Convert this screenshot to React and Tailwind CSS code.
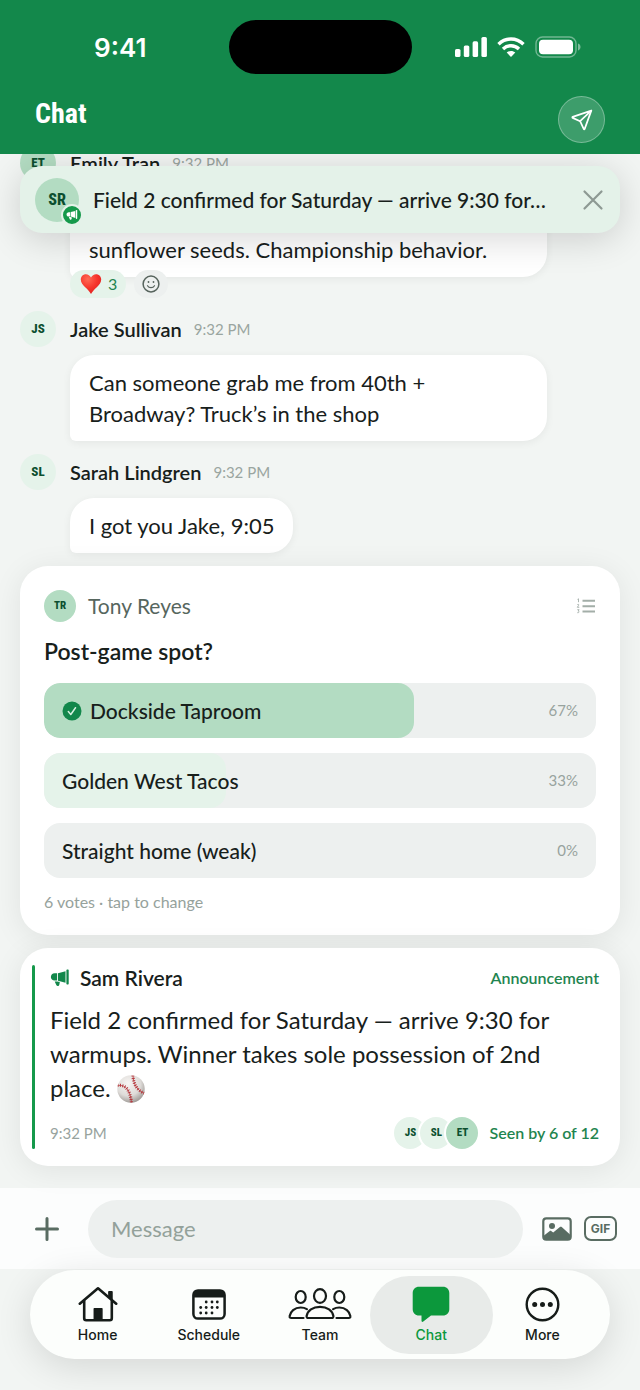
import React, { useState } from "react";

const options = [
  { id: 1, label: "Dockside Taproom", percent: 67 },
  { id: 2, label: "Golden West Tacos", percent: 33 },
  { id: 3, label: "Straight home (weak)", percent: 0 },
];

const seenBy = [
  { initials: "JS", color: "bg-[#e5f3ea]" },
  { initials: "SL", color: "bg-[#e5f3ea]" },
  { initials: "ET", color: "bg-[#b3dcc2]" },
];

const MegaphoneIcon = ({ className }) => (
  <svg className={className} viewBox="0 0 20 20" fill="currentColor">
    <path d="M17.4 1.5h.3c.6 0 1 .4 1 1v13c0 .6-.4 1-1 1h-.3c-.6 0-1-.4-1-1v-13c0-.6.4-1 1-1z" />
    <path d="M15.5 3.2v11.6L8 12.7V5.2l7.500-2z" />
    <path d="M7.100 5.300v7.300H4.600C2.400 12.600.9 11.100.9 9s1.500-3.700 3.700-3.700h2.500z" />
    <path d="M4.700 13.500h2.500l2.600.6-.5 2.600c-.2.800-.7 1.300-1.500 1.300-.7 0-1.200-.4-1.500-1.100l-1.600-3.400z" />
  </svg>
);

const HeartIcon = () => (
  <svg className="w-[22px] h-[22px]" viewBox="0 0 22 22">
    <defs>
      <radialGradient id="heart" cx="0.35" cy="0.25" r="0.9">
        <stop offset="0" stopColor="#ff6a55" />
        <stop offset="0.5" stopColor="#f6352b" />
        <stop offset="1" stopColor="#d91a1c" />
      </radialGradient>
    </defs>
    <path
      fill="url(#heart)"
      d="M11 21C9.600 18.300 7.500 16.400 5.200 14.200 2.900 12 .8 9.800.8 6.600.8 3.400 3.100 1.200 5.900 1.200c2.200 0 4.100 1.300 5.100 3.300 1-2 2.900-3.300 5.100-3.300 2.800 0 5.100 2.200 5.100 5.400 0 3.200-2.100 5.400-4.400 7.600C14.500 16.400 12.400 18.300 11 21z"
    />
  </svg>
);

const BaseballIcon = () => (
  <svg className="inline-block w-7 h-7 align-[-6px]" viewBox="0 0 28 28">
    <defs>
      <radialGradient id="ball" cx="0.4" cy="0.3" r="0.75">
        <stop offset="0" stopColor="#f7f5f3" />
        <stop offset="0.6" stopColor="#dedbd8" />
        <stop offset="1" stopColor="#98938f" />
      </radialGradient>
      <clipPath id="ballClip">
        <circle cx="14" cy="14" r="13.700" />
      </clipPath>
    </defs>
    <circle cx="14" cy="14" r="13.700" fill="url(#ball)" />
    <g clipPath="url(#ballClip)" fill="none" stroke="#b5343a">
      <path d="M.5 10.500c7-1 12.500 3 14 17" strokeWidth="0.8" />
      <path d="M.5 10.500c7-1 12.500 3 14 17" strokeWidth="3.200" strokeDasharray="0.9 1.500" />
      <path d="M16 .5c.3 9 4.500 15.500 12 18" strokeWidth="0.8" />
      <path d="M16 .5c.3 9 4.500 15.500 12 18" strokeWidth="3.200" strokeDasharray="0.9 1.500" />
    </g>
  </svg>
);

const SmileIcon = () => (
  <svg className="w-[18px] h-[18px]" viewBox="0 0 18 18" fill="none" stroke="#56635c">
    <circle cx="9" cy="9" r="7.900" strokeWidth="1.500" />
    <path d="M5.500 10.700c.8 1.300 2 1.900 3.500 1.900s2.700-.6 3.500-1.900" strokeWidth="1.200" strokeLinecap="round" />
    <ellipse cx="6.500" cy="7" rx="0.900" ry="1.100" fill="#56635c" stroke="none" />
    <ellipse cx="11.500" cy="7" rx="0.900" ry="1.100" fill="#56635c" stroke="none" />
  </svg>
);

const HomeIcon = () => (
  <svg className="w-10 h-9" viewBox="0 0 40 36" fill="none" stroke="currentColor" strokeLinecap="round" strokeLinejoin="round">
    <path d="M1.800 17.700 20 2.300l18.200 15.400" strokeWidth="2.600" />
    <path d="M6.200 15v17.200c0 1.200.8 2 2 2h23.600c1.200 0 2-.8 2-2V15" strokeWidth="2.600" />
    <path d="M31 5.500h3.200v8.700L31 11.500z" fill="currentColor" strokeWidth="1" />
    <path d="M16.300 22.700h7.600v11h-7.600z" fill="currentColor" strokeWidth="1.500" />
  </svg>
);

const ScheduleIcon = () => (
  <svg className="w-[34px] h-[31px]" viewBox="0 0 34 31" fill="none">
    <rect x="1.400" y="1.400" width="31.200" height="28.200" rx="4.600" stroke="currentColor" strokeWidth="2.500" />
    <path d="M1 8.500V6a5 5 0 0 1 5-5h22a5 5 0 0 1 5 5v2.500z" fill="currentColor" />
    <g fill="currentColor">
      {[14.200, 20, 25.300].map((x) => <circle key={x} cx={x} cy="13" r="1.400" />)}
      {[8.700, 14.200, 20, 25.300].map((x) => <circle key={x} cx={x} cy="18.500" r="1.400" />)}
      {[8.700, 14.200, 20].map((x) => <circle key={x} cx={x} cy="24" r="1.400" />)}
    </g>
  </svg>
);

const TeamIcon = () => (
  <svg className="w-16 h-8" viewBox="0 0 64 32" fill="none" stroke="currentColor" strokeWidth="2.200" strokeLinecap="round">
    <ellipse cx="12.700" cy="9" rx="5" ry="6" />
    <ellipse cx="51.300" cy="9" rx="5" ry="6" />
    <ellipse cx="32" cy="8" rx="6" ry="6.900" />
    <path d="M15.500 30H3.300c-1.200 0-1.900-.7-1.700-1.800.7-4.800 5-8.700 11.100-8.700 2.400 0 4.500.6 6.200 1.600" />
    <path d="M48.500 30h12.200c1.200 0 1.900-.7 1.700-1.800-.7-4.800-5-8.700-11.100-8.700-2.400 0-4.500.6-6.200 1.600" />
    <path d="M20.400 30h23.200c1.300 0 2-.8 1.800-2-.9-5.300-6.200-9.200-13.400-9.200s-12.500 3.900-13.400 9.200c-.2 1.200.5 2 1.800 2z" />
  </svg>
);

const ChatIcon = () => (
  <svg className="w-[38px] h-9" viewBox="0 0 38 36" fill="currentColor">
    <path d="M7 .7h24c3.700 0 6.300 2.600 6.300 6.300v16.200c0 3.700-2.600 6.300-6.300 6.300H19l-7.700 6.100c-.9.700-1.800.3-1.800-.8v-5.300H7c-3.700 0-6.300-2.600-6.300-6.300V7C.7 3.300 3.300.7 7 .7z" />
  </svg>
);

const MoreIcon = () => (
  <svg className="w-[35px] h-[35px]" viewBox="0 0 35 35" fill="none">
    <circle cx="17.500" cy="17.500" r="15.800" stroke="currentColor" strokeWidth="2.400" />
    <g fill="currentColor">
      <circle cx="9.700" cy="17.500" r="2.500" />
      <circle cx="17.500" cy="17.500" r="2.500" />
      <circle cx="25.300" cy="17.500" r="2.500" />
    </g>
  </svg>
);

const tabs = [
  { name: "Home", icon: <HomeIcon /> },
  { name: "Schedule", icon: <ScheduleIcon /> },
  { name: "Team", icon: <TeamIcon /> },
  { name: "Chat", icon: <ChatIcon /> },
  { name: "More", icon: <MoreIcon /> },
];

const MessageHeader = ({ initials, name, color }) => (
  <div className="flex items-center h-9">
    <div
      className={`w-9 h-9 rounded-full flex items-center justify-center font-['Roboto_Condensed','Roboto',sans-serif] font-extrabold text-[13px] text-[#0c4f2f] ${color}`}
    >
      {initials}
    </div>
    <span className="ml-3.5 text-xl font-semibold">{name}</span>
    <span className="ml-3 text-[15px] text-[#9aa5a0]">9:32 PM</span>
  </div>
);

const StatusBar = () => (
  <div className="flex items-center justify-between h-[94px] pl-[94px] pr-[59px]">
    <span className="w-[134px] font-['Inter',sans-serif] text-[26px] font-semibold">9:41</span>
    <div className="w-[183px] h-[54px] rounded-full bg-black" />
    <div className="w-[169px] flex items-center justify-end gap-2.5">
      <svg className="w-8 h-5" viewBox="0 0 32 20" fill="currentColor">
        <rect x="0" y="12" width="5.500" height="8" rx="1.600" />
        <rect x="8.800" y="8.500" width="5.500" height="11.500" rx="1.600" />
        <rect x="17.600" y="4.300" width="5.500" height="15.700" rx="1.600" />
        <rect x="26.400" y="0" width="5.500" height="20" rx="1.600" />
      </svg>
      <svg className="w-7 h-5" viewBox="0 0 28 20" fill="none" stroke="currentColor" strokeWidth="3.400">
        <path d="M1.500 7.200C5 3.800 9.300 2 14 2s9 1.800 12.500 5.200" />
        <path d="M6 12c2.300-2.200 5-3.300 8-3.300s5.700 1.100 8 3.300" />
        <path d="M14 20l-4.300-4.400c1.200-1.100 2.600-1.700 4.300-1.700s3.100.6 4.300 1.700z" fill="currentColor" stroke="none" />
      </svg>
      <svg className="w-[46px] h-[22px]" viewBox="0 0 46 22" fill="none">
        <rect x="1" y="1" width="40" height="20" rx="6.500" stroke="#fff" strokeOpacity="0.4" strokeWidth="1.400" />
        <rect x="4" y="3.800" width="34" height="14.400" rx="4" fill="#fff" />
        <path d="M43 7.500c1.600.6 2.500 1.900 2.500 3.500s-.9 2.900-2.500 3.500z" fill="#fff" fillOpacity="0.45" />
      </svg>
    </div>
  </div>
);

const PinnedBanner = ({ onClose }) => (
  <div className="absolute z-[5] top-[21px] inset-x-5 h-[67px] rounded-[22px] bg-[#e4f2e9] shadow-[0_6px_36px_rgba(0,0,0,0.16)] flex items-center pl-[15px] pr-4">
    <div className="relative w-11 h-11 shrink-0 rounded-full bg-[#b3dcc2] flex items-center justify-center font-['Roboto_Condensed','Roboto',sans-serif] font-extrabold text-base text-[#0c4f2f]">
      SR
      <span className="absolute -right-1 -bottom-1 w-[22px] h-[22px] rounded-full border-2 border-[#e4f2e9] bg-[#15994b] text-white flex items-center justify-center">
        <MegaphoneIcon className="w-3 h-3" />
      </span>
    </div>
    <p className="ml-3.5 flex-1 min-w-0 whitespace-nowrap text-[21px] leading-7 font-medium">
      Field 2 confirmed for Saturday — arrive 9:30 for…
    </p>
    <button aria-label="Dismiss" onClick={onClose} className="cursor-pointer">
      <svg className="w-[22px] h-[22px]" viewBox="0 0 22 22" stroke="#8d9993" strokeWidth="2.200" strokeLinecap="round">
        <path d="M2.500 2.500l17 17M19.500 2.500l-17 17" />
      </svg>
    </button>
  </div>
);

const Poll = () => {
  const [selected, setSelected] = useState(1);

  return (
    <section className="rounded-[28px] bg-white px-6 pt-6 pb-[23px] shadow-[0_4px_30px_rgba(0,0,0,0.08)]">
      <div className="flex items-center h-8">
        <div className="w-8 h-8 rounded-full bg-[#b3dcc2] flex items-center justify-center font-['Roboto_Condensed','Roboto',sans-serif] font-extrabold text-[11px] text-[#0c4f2f]">
          TR
        </div>
        <span className="ml-3 flex-1 text-[21px] leading-7 text-[#56665e]">Tony Reyes</span>
        <svg className="w-5 h-4" viewBox="0 0 20 16" stroke="#a3aea8" fill="none">
          <path d="M6.500 2.700h12.500M6.500 8.200h12.500M6.500 13.600h12.500" strokeWidth="2" />
          <path d="M1.500 1.400l1-.6v3.400M1.300 6.700c1-.9 2-.1 1.200.9L1.300 9.300H3.300M1.300 11.700h1.800l-.9 1.400c1.400.1 1 2-.9 1.600" strokeWidth="0.900" />
        </svg>
      </div>
      <h2 className="mt-3.5 text-[23px] leading-[30px] font-semibold">Post-game spot?</h2>
      <div className="mt-[17px] flex flex-col gap-[15px]">
        {options.map((option) => (
          <button
            key={option.id}
            onClick={() => setSelected(option.id)}
            className="relative h-[55px] rounded-2xl overflow-hidden bg-[#edf0ef] flex items-center px-[18px] text-left cursor-pointer"
          >
            <span
              className={`absolute inset-y-0 left-0 rounded-2xl ${selected === option.id ? "bg-[#b3dcc2]" : "bg-[#e5f3ea]"}`}
              style={{ width: `${option.percent}%` }}
            />
            {selected === option.id && (
              <svg className="relative w-5 h-5 mr-2" viewBox="0 0 20 20" fill="none">
                <circle cx="10" cy="10" r="9.500" fill="#12874b" />
                <path d="M6.300 10.600l2.500 2.900 4.700-6.800" stroke="#d5efdf" strokeWidth="1.500" strokeLinecap="round" strokeLinejoin="round" />
              </svg>
            )}
            <span className="relative flex-1 text-[21px] leading-7 font-medium">{option.label}</span>
            <span className="relative text-[15px] text-[#98a39e]">{option.percent}%</span>
          </button>
        ))}
      </div>
      <p className="mt-3.5 text-base leading-5 text-[#96a29c]">6 votes · tap to change</p>
    </section>
  );
};

const Announcement = () => (
  <section className="rounded-[28px] bg-white py-[17px] pl-3 pr-[21px] flex gap-[15px] shadow-[0_4px_30px_rgba(0,0,0,0.08)]">
    <div className="w-[3px] shrink-0 rounded-full bg-[#15994b]" />
    <div className="flex-1 min-w-0">
      <div className="flex items-center h-[26px]">
        <MegaphoneIcon className="w-5 h-5 text-[#12874b]" />
        <h2 className="ml-2.5 flex-1 text-[21px] leading-7 font-semibold">Sam Rivera</h2>
        <span className="text-base font-semibold text-[#1f8550]">Announcement</span>
      </div>
      <p className="mt-3 text-2xl leading-[34px]">
        Field 2 confirmed for Saturday — arrive 9:30 for
        <br />
        warmups. Winner takes sole possession of 2nd
        <br />
        place. <BaseballIcon />
      </p>
      <div className="mt-3 flex items-center h-8">
        <span className="flex-1 text-[15px] text-[#98a39e]">9:32 PM</span>
        <div className="flex">
          {seenBy.map((person) => (
            <div
              key={person.initials}
              className={`w-8 h-8 -ml-1.5 rounded-full ring-2 ring-white flex items-center justify-center font-['Roboto_Condensed','Roboto',sans-serif] font-extrabold text-[11px] text-[#0c4f2f] ${person.color}`}
            >
              {person.initials}
            </div>
          ))}
        </div>
        <span className="ml-[11px] text-base font-semibold text-[#1f8550]">Seen by 6 of 12</span>
      </div>
    </div>
  </section>
);

const Composer = () => (
  <form className="bg-[#fcfdfd] flex items-center h-[81px] pl-[35px] pr-[23px]" onSubmit={(e) => e.preventDefault()}>
    <button type="button" aria-label="Add attachment" className="cursor-pointer">
      <svg className="w-6 h-6" viewBox="0 0 24 24" stroke="#596c62" strokeWidth="3" strokeLinecap="round">
        <path d="M12 1.500v21M1.500 12h21" />
      </svg>
    </button>
    <input
      type="text"
      aria-label="Message"
      placeholder="Message"
      className="ml-[29px] flex-1 min-w-0 h-[58px] rounded-full bg-[#edf0ef] px-[23px] text-[22px] placeholder:text-[#93a19a] outline-none"
    />
    <button type="button" aria-label="Send photo" className="ml-[19px] cursor-pointer">
      <svg className="w-[30px] h-6" viewBox="0 0 30 24" fill="none">
        <rect x="1.300" y="1.300" width="27.400" height="21.400" rx="3" stroke="#596c62" strokeWidth="2.200" />
        <circle cx="10" cy="9" r="3" fill="#596c62" />
        <path d="M2 18.500l5.500-4.300c.8-.6 1.300-.5 2 0l1.700 1.300 6.400-5.200c.8-.6 1.600-.6 2.400 0l8 7.200V22H2z" fill="#596c62" />
      </svg>
    </button>
    <button
      type="button"
      className="ml-3 w-[33px] h-[25px] rounded-[7px] border-2 border-[#596c62] text-[#596c62] flex items-center justify-center font-['Inter',sans-serif] text-xs font-bold cursor-pointer"
    >
      GIF
    </button>
  </form>
);

const TabBar = () => {
  const [active, setActive] = useState("Chat");

  return (
    <nav className="mx-[30px] mt-px mb-[31px] h-[89px] rounded-full bg-[#fcfefc] px-3 flex items-center shadow-[0_8px_36px_rgba(0,0,0,0.12)] font-['Inter',sans-serif]">
      {tabs.map((tab) => (
        <div key={tab.name} className="flex-1 min-w-0 flex">
          <button
            onClick={() => setActive(tab.name)}
            className={`flex-1 -mx-1.5 h-[78px] rounded-full flex flex-col items-center cursor-pointer ${
              active === tab.name ? "bg-[#e8ebe9] text-[#0c983c]" : "text-[#161c19]"
            }`}
          >
            <span className="h-[49px] flex items-center justify-center pt-2">{tab.icon}</span>
            <span className="text-sm leading-5 font-medium">{tab.name}</span>
          </button>
        </div>
      ))}
    </nav>
  );
};

const App = () => {
  const [showBanner, setShowBanner] = useState(true);

  return (
    <div className="min-h-screen flex flex-col bg-[#f2f5f3] text-[#17201b] font-['Lato',sans-serif]">
      <header className="relative z-10 h-[154px] bg-[#13884b] text-white">
        <StatusBar />
        <div className="flex justify-between h-[49px] px-[35px]">
          <h1 className="font-['Roboto_Condensed','Roboto',sans-serif] text-[28px] leading-10 font-bold">Chat</h1>
          <button
            aria-label="Direct messages"
            className="self-end w-[47px] h-[47px] rounded-full border border-white/30 bg-white/18 flex items-center justify-center cursor-pointer"
          >
            <svg className="w-[22px] h-[22px]" viewBox="0 0 22 22" fill="none" stroke="currentColor" strokeWidth="1.700" strokeLinejoin="round" strokeLinecap="round">
              <path d="M20.300 1.600L1.700 7.900c-.5.200-.5.800 0 1l7.400 3.300 3.600 7.700c.2.500.8.500 1 0z" />
              <path d="M20.300 1.600L9.100 12.200" />
            </svg>
          </button>
        </div>
      </header>

      <main className="relative flex-1 -mt-[9px] px-5 pb-[22px] flex flex-col gap-[13px]">
        {showBanner && <PinnedBanner onClose={() => setShowBanner(false)} />}

        <article>
          <MessageHeader initials="ET" name="Emily Tran" color="bg-[#b3dcc2]" />
          <div className="pl-[50px] pr-[73px]">
            <div className="mt-2 min-h-[88px] flex items-end rounded-[24px] rounded-bl-md bg-white px-[19px] py-3 shadow-[0_2px_8px_rgba(0,0,0,0.06)]">
              <p className="text-[22px] leading-[31px]">sunflower seeds. Championship behavior.</p>
            </div>
            <div className="relative -mt-[7px] flex gap-2">
              <button className="h-7 pl-2.5 pr-[9px] rounded-full bg-[#e5f3ea] flex items-center gap-1.5 text-base text-[#1f8550] cursor-pointer">
                <HeartIcon />3
              </button>
              <button aria-label="Add reaction" className="h-7 px-2 rounded-full bg-[#edf0ef] cursor-pointer">
                <SmileIcon />
              </button>
            </div>
          </div>
        </article>

        <article>
          <MessageHeader initials="JS" name="Jake Sullivan" color="bg-[#e5f3ea]" />
          <div className="pl-[50px] pr-[73px]">
            <p className="mt-2 rounded-[24px] rounded-bl-md bg-white px-[19px] py-3 text-[22px] leading-[31px] shadow-[0_2px_8px_rgba(0,0,0,0.06)]">
              Can someone grab me from 40th +
              <br />
              Broadway? Truck’s in the shop
            </p>
          </div>
        </article>

        <article>
          <MessageHeader initials="SL" name="Sarah Lindgren" color="bg-[#e5f3ea]" />
          <div className="pl-[50px] pr-[73px]">
            <p className="mt-2 w-fit rounded-[24px] rounded-bl-md bg-white px-[19px] py-3 text-[22px] leading-[31px] shadow-[0_2px_8px_rgba(0,0,0,0.06)]">
              I got you Jake, 9:05
            </p>
          </div>
        </article>

        <Poll />
        <Announcement />
      </main>

      <footer>
        <Composer />
        <TabBar />
      </footer>
    </div>
  );
};

export default App;
